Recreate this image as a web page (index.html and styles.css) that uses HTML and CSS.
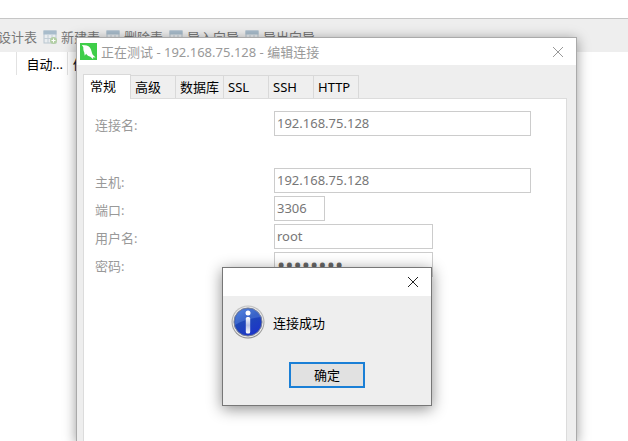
FILE: index.html
```html
<!DOCTYPE html>
<html lang="zh-CN">
<head>
    <meta charset="UTF-8">
    <meta name="viewport" content="width=device-width, initial-scale=1.0">
    <title>编辑连接</title>
    <link rel="stylesheet" href="styles.css">
</head>
<body>
    <!-- Table icon shared by the toolbar buttons -->
    <svg class="symbols" width="0" height="0" aria-hidden="true">
        <symbol id="table-icon" viewBox="0 0 14 14">
            <rect x="1" y="1" width="12" height="12" fill="#e9edf0" stroke="#b9c6cf"/>
            <rect x=".5" y=".5" width="13" height="4" fill="#a8bccb"/>
            <path d="M5 5v8M9 5v8M1 8.500h12" stroke="#c3ced6" fill="none"/>
        </symbol>
    </svg>

    <main class="app">
        <nav class="toolbar">
            <button class="tool"><svg class="tool-icon"><use href="#table-icon"/></svg>设计表</button>
            <button class="tool">
                <svg class="tool-icon" viewBox="0 0 14 14">
                    <use href="#table-icon" width="14" height="14"/>
                    <circle cx="10.500" cy="10.500" r="3.500" fill="#b3cfa5"/>
                    <path d="M10.500 8.500v4M8.500 10.500h4" stroke="#fff"/>
                </svg>新建表
            </button>
            <button class="tool">
                <svg class="tool-icon" viewBox="0 0 14 14">
                    <use href="#table-icon" width="14" height="14"/>
                    <circle cx="10.500" cy="10.500" r="3.500" fill="#d9a79f"/>
                    <path d="M8.500 10.500h4" stroke="#fff"/>
                </svg>删除表
            </button>
            <button class="tool"><svg class="tool-icon"><use href="#table-icon"/></svg>导入向导</button>
            <button class="tool"><svg class="tool-icon"><use href="#table-icon"/></svg>导出向导</button>
        </nav>
        <table class="list">
            <thead>
                <tr><th class="col-name"></th><th class="col-auto">自动...</th><th>修改日期</th></tr>
            </thead>
        </table>
    </main>

    <section class="dialog" role="dialog" aria-labelledby="dialog-title">
        <header class="title-bar">
            <svg class="logo" viewBox="0 0 18 18" aria-hidden="true">
                <rect width="18" height="18" fill="#3fce49"/>
                <path d="M2 2l3 .5C8 2.500 10.500 4 11.500 6.500c.8 2 1 4 2 6l3 2.800-2.800-.3.300 2.200-3-2.700C9 14.500 7.500 13 6.500 11.500L5 13.500 4.500 10C3.500 8 3.500 6 3.500 4.500z" fill="#fff"/>
            </svg>
            <h1 id="dialog-title">正在测试 - 192.168.75.128 - 编辑连接</h1>
            <button class="close" aria-label="关闭">
                <svg viewBox="0 0 12 12"><path d="M1 1l10 10M11 1L1 11"/></svg>
            </button>
        </header>
        <div class="dialog-body">
            <div class="tabs" role="tablist">
                <button class="tab active" role="tab" aria-selected="true">常规</button>
                <button class="tab" role="tab">高级</button>
                <button class="tab" role="tab">数据库</button>
                <button class="tab" role="tab">SSL</button>
                <button class="tab" role="tab">SSH</button>
                <button class="tab" role="tab">HTTP</button>
            </div>
            <form class="panel">
                <div class="field field-name">
                    <label for="name">连接名:</label>
                    <input id="name" type="text" value="192.168.75.128">
                </div>
                <div class="field">
                    <label for="host">主机:</label>
                    <input id="host" type="text" value="192.168.75.128">
                </div>
                <div class="field">
                    <label for="port">端口:</label>
                    <input id="port" class="short" type="text" value="3306">
                </div>
                <div class="field">
                    <label for="user">用户名:</label>
                    <input id="user" class="medium" type="text" value="root">
                </div>
                <div class="field">
                    <label for="password">密码:</label>
                    <input id="password" class="medium" type="password" value="password">
                </div>
            </form>
        </div>
    </section>

    <section class="message" role="alertdialog" aria-labelledby="message-text">
        <header class="title-bar">
            <button class="close" aria-label="关闭">
                <svg viewBox="0 0 12 12"><path d="M1 1l10 10M11 1L1 11"/></svg>
            </button>
        </header>
        <div class="message-body">
            <svg class="info-icon" viewBox="0 0 34 34" aria-hidden="true">
                <defs>
                    <linearGradient id="ring" x1="0" y1="0" x2="0" y2="1">
                        <stop offset="0" stop-color="#c4c4c4"/>
                        <stop offset="1" stop-color="#8a8a8a"/>
                    </linearGradient>
                    <linearGradient id="ball" x1="0" y1="0" x2="0.600" y2="1">
                        <stop offset="0" stop-color="#4a7fe0"/>
                        <stop offset="0.500" stop-color="#1f48b8"/>
                        <stop offset="1" stop-color="#1c35c8"/>
                    </linearGradient>
                    <linearGradient id="stem" x1="0" y1="0" x2="0" y2="1">
                        <stop offset="0" stop-color="#fff"/>
                        <stop offset="0.500" stop-color="#b9c3e4"/>
                        <stop offset="1" stop-color="#fff"/>
                    </linearGradient>
                </defs>
                <circle cx="17" cy="17" r="16.500" fill="url(#ring)"/>
                <circle cx="17" cy="17" r="15.500" fill="#e6e6e6"/>
                <circle cx="17" cy="17" r="14" fill="url(#ball)" stroke="#777f96"/>
                <path d="M4 20C4 9 9 4 17 4s12 4 13 8C22 13 12 15 4 20z" fill="#7ba5f0" opacity="0.300"/>
                <circle cx="17" cy="8" r="2.500" fill="#fff"/>
                <rect x="14.800" y="12" width="4.400" height="16.500" rx="1.500" fill="url(#stem)"/>
            </svg>
            <p id="message-text">连接成功</p>
        </div>
        <footer class="message-footer">
            <button class="ok">确定</button>
        </footer>
    </section>
</body>
</html>
```
FILE: styles.css
```css
* {
    box-sizing: border-box;
}

body {
    margin: 0;
    height: 100vh;
    position: relative;
    overflow: hidden;
    background-color: #fff;
    color: #000;
    font-family: "Noto Sans", "Noto Sans CJK SC", sans-serif;
    font-size: 13px;
    line-height: 20px;
}

button, input {
    font: inherit;
    color: inherit;
    margin: 0;
    padding: 0;
    border: none;
    background: none;
}

.symbols {
    position: absolute;
}

/* Main window behind the dialogs */
.app {
    padding-top: 18px;
}

.toolbar {
    display: flex;
    align-items: center;
    gap: 6px;
    height: 34px;
    padding-top: 3px;
    border-top: 1px solid #c6c6c6;
    background-color: #eee;
    color: #777;
}

.tool {
    display: flex;
    flex: none;
    align-items: center;
    gap: 4px;
    white-space: nowrap;
}

.tool:first-child {
    margin-left: -20px;
}

.tool-icon {
    width: 14px;
    height: 14px;
}

.list {
    border-collapse: collapse;
}

.list th {
    height: 23px;
    padding: 0 5px;
    font-weight: normal;
    text-align: left;
    white-space: nowrap;
    border-right: 1px solid #e2e2e2;
}

.list .col-name {
    min-width: 16px;
}

.list .col-auto {
    padding-left: 10px;
    padding-right: 4px;
}

.title-bar {
    display: flex;
    align-items: center;
    height: 28px;
    padding: 0 12px 0 3px;
    background-color: #fff;
}

.close {
    width: 12px;
    height: 12px;
    margin-left: auto;
    display: flex;
}

.close svg {
    width: 12px;
    height: 12px;
    fill: none;
    stroke: #222;
}

/* Connection dialog */
.dialog {
    position: absolute;
    top: 37px;
    left: 76px;
    right: 51px;
    bottom: -1px;
    display: flex;
    flex-direction: column;
    border: 1px solid #aaa;
    background-color: #eee;
    color: #999;
    box-shadow: 0 2px 12px rgba(0, 0, 0, 0.4);
}

.dialog .title-bar {
    height: 27px;
}

.dialog .close svg {
    stroke: #999;
}

.logo {
    width: 17px;
    height: 17px;
}

.dialog h1 {
    margin: 0 0 0 4px;
    font-size: 13px;
    font-weight: normal;
}

.dialog-body {
    display: flex;
    flex: 1;
    flex-direction: column;
    padding: 9px 9px 0 6px;
}

.tabs {
    display: flex;
    align-items: flex-end;
    color: #000;
}

.tab {
    min-width: 45px;
    height: 23px;
    padding: 0 4px;
    text-align: left;
    border: 1px solid #d9d9d9;
    border-width: 1px 1px 0 0;
    background-color: #efefef;
}

.tab.active {
    width: 48px;
    height: 25px;
    margin-bottom: -1px;
    padding: 0 6px 3px;
    border-left-width: 1px;
    background-color: #fff;
    z-index: 1;
}

.panel {
    flex: 1;
    padding: 12px 35px 0 11px;
    border: 1px solid #dcdcdc;
    border-bottom: none;
    background-color: #fff;
}

.field {
    display: flex;
    align-items: center;
    margin-bottom: 3px;
}

.field-name {
    margin-bottom: 32px;
}

.field label {
    flex: none;
    width: 179px;
    padding-top: 3px;
}

.field input {
    flex: 1;
    min-width: 0;
    height: 25px;
    padding: 0 2px 2px;
    border: 1px solid #ccc;
    color: #777;
}

.field .short {
    flex: none;
    width: 51px;
}

.field .medium {
    flex: none;
    width: 159px;
}

.field input[type="password"] {
    font-size: 22px;
    color: #666;
}

/* Message box */
.message {
    position: absolute;
    top: 267px;
    left: 222px;
    width: 210px;
    border: 1px solid #777;
    background-color: #eee;
    box-shadow: 0 3px 14px rgba(0, 0, 0, 0.45);
}

.message-body {
    display: flex;
    align-items: center;
    gap: 8px;
    padding: 9px 8px 0;
}

.message-body p {
    margin: 0;
    padding-top: 2px;
}

.info-icon {
    width: 34px;
    height: 34px;
}

.message-footer {
    padding: 23px 0 17px;
    text-align: center;
}

.ok {
    width: 76px;
    height: 26px;
    border: 2px solid #1a7fd6;
    background-color: #e1e1e1;
}
```
